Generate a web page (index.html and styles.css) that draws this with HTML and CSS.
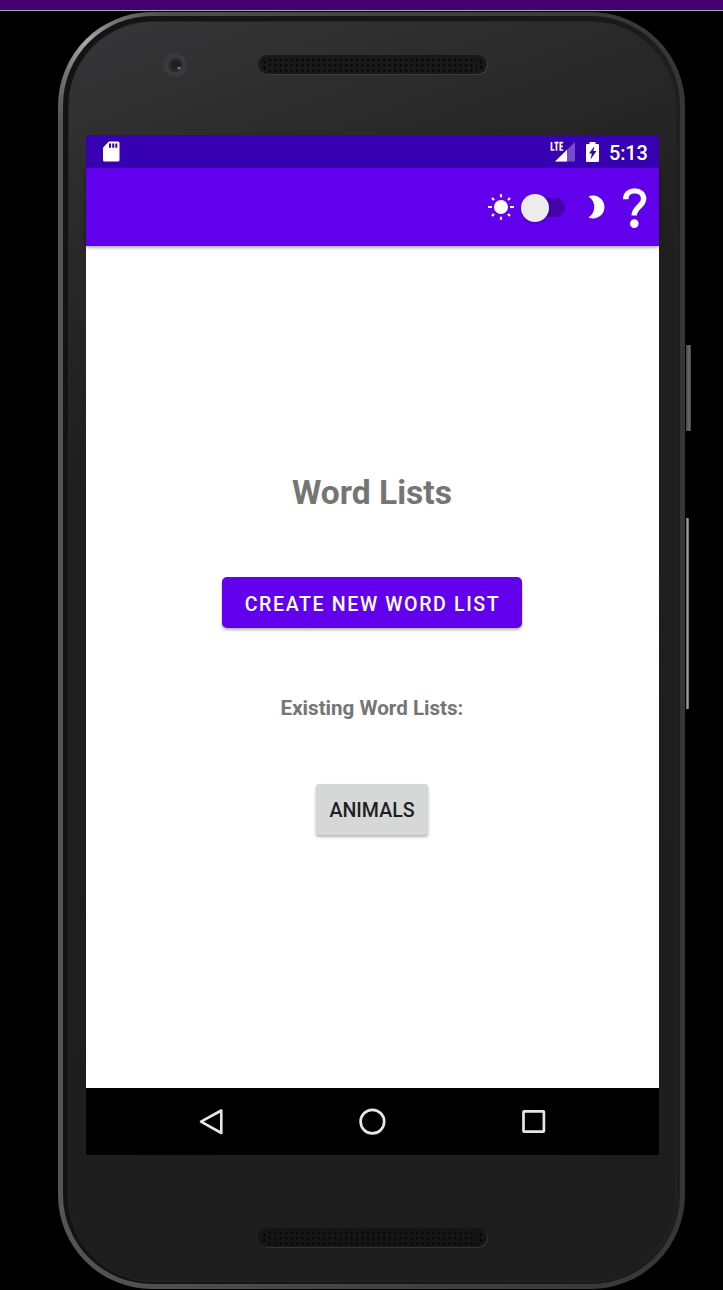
FILE: index.html
```html
<!DOCTYPE html>
<html lang="en">
<head>
<meta charset="utf-8">
<title>Word Lists</title>
<link rel="stylesheet" href="styles.css">
</head>
<body>
<div class="strip"></div>
<div class="phone">
  <span class="side-key power"></span>
  <span class="side-key volume"></span>
  <div class="groove">
    <div class="face">
      <div class="bezel-top">
        <svg class="camera" width="26" height="26" viewBox="0 0 26 26">
          <circle cx="13" cy="13" r="12" fill="#3a3a3b"/>
          <circle cx="13.5" cy="13" r="7" fill="#28282d"/>
          <circle cx="14" cy="13" r="4.500" fill="#201c26"/>
          <path d="M15 15h4l-1 3-2-1z" fill="#9a6062"/>
        </svg>
        <svg class="speaker" width="230" height="20" viewBox="0 0 230 20">
          <defs>
            <pattern id="holes" x="10" y="2.3" width="5.45" height="5.35" patternUnits="userSpaceOnUse">
              <circle cx="2" cy="2.4" r="1.4" fill="#050505"/>
              <circle cx="2.8" cy="1.6" r=".5" fill="#333"/>
            </pattern>
          </defs>
          <rect x="1" y="1" width="229" height="19" rx="9.5" fill="#3c3c3c"/>
          <rect x="0" y="0" width="229" height="19" rx="9.5" fill="#191919"/>
          <rect x="10" y="2.3" width="209" height="16" fill="url(#holes)"/>
          <g fill="#050505"><circle cx="6.5" cy="7" r="1.4"/><circle cx="6.5" cy="12.3" r="1.4"/><circle cx="223" cy="7" r="1.4"/><circle cx="223" cy="12.3" r="1.4"/></g>
        </svg>
      </div>
      <main class="screen">
        <div class="status">
          <svg class="sd" width="17" height="21" viewBox="0 0 17 21"><path fill="#fff" d="M6 .5h9a1.500 1.500 0 0 1 1.500 1.500v17a1.500 1.500 0 0 1-1.500 1.500H1.500A1.500 1.500 0 0 1 0 19V6.500z"/><path fill="#3700b3" d="M6 2.500h2v4.300H6zM9.200 2.500h2v4.300h-2zM12.300 2.500h2v4.300h-2z"/></svg>
          <div class="status-right">
            <svg class="signal" width="25" height="21" viewBox="0 0 25 21"><path fill="#fff" fill-opacity=".3" d="M25 1v19.500H5z"/><path fill="#fff" d="M17 8.800v11.700H5z"/><path fill="none" stroke="#fff" stroke-width="1.700" d="M1.500 1v8h3M4.400 1.700h4.200M6.500 1.700v8M13.200 1.700h-2.900V9h2.900M10.300 5.300h2.500"/></svg>
            <svg class="battery" width="13" height="20" viewBox="0 0 13 20"><path fill="#fff" d="M3.500 0h6v2H12a1 1 0 0 1 1 1v16a1 1 0 0 1-1 1H1a1 1 0 0 1-1-1V3a1 1 0 0 1 1-1h2.500z"/><path fill="#3700b3" d="M8.500 4 3 11.500h2.800L4.500 17.500l6-8.500H7.300z"/></svg>
            <span class="time">5:13</span>
          </div>
        </div>
        <header class="toolbar">
          <svg class="sun" width="26" height="26" viewBox="0 0 26 26"><circle cx="13" cy="13" r="7" fill="#fff"/><path stroke="#fff" stroke-width="2.200" d="M13 .3v3M13 22.700v3M0 13h4M22 13h4M4 4l2 2M20 20l2 2M22 4l-2 2M6 20l-2 2"/></svg>
          <div class="switch"><span class="thumb"></span></div>
          <svg class="moon" width="19" height="24" viewBox="0 0 19 24"><path fill="#fff" d="M.5 1.400A11.500 11.500 0 1 1 .5 22.600Q6.300 18.500 6.300 12T.5 1.400z"/></svg>
          <svg class="help" width="24" height="40" viewBox="0 0 24 40"><path fill="none" stroke="#fff" stroke-width="5.400" d="M2.700 11.200C2.700 5.700 6.600 2.900 11.600 2.900s9 2.900 9 7.900c0 7.500-9.400 8-9.400 16.700"/><circle cx="11.300" cy="35.600" r="4.300" fill="#fff"/></svg>
        </header>
        <section class="content">
          <h1 class="title">Word Lists</h1>
          <button class="create">CREATE NEW WORD LIST</button>
          <h2 class="subtitle">Existing Word Lists:</h2>
          <button class="list">ANIMALS</button>
        </section>
        <nav class="nav">
          <svg width="28" height="28" viewBox="0 0 28 28"><path fill="none" stroke="#e6e6e6" stroke-width="2.600" stroke-linejoin="round" d="M24.300 2.500v22.500L4 13.700z"/></svg>
          <svg width="28" height="28" viewBox="0 0 28 28"><circle cx="14.400" cy="13.600" r="11.800" fill="none" stroke="#e6e6e6" stroke-width="2.700"/></svg>
          <svg width="28" height="28" viewBox="0 0 28 28"><rect x="4.500" y="3.300" width="20.400" height="20.400" rx=".8" fill="none" stroke="#e6e6e6" stroke-width="2.700"/></svg>
        </nav>
      </main>
      <div class="bezel-bottom">
        <svg class="speaker" width="230" height="20" viewBox="0 0 230 20">
          <rect x="1" y="1" width="229" height="19" rx="9.500" fill="#343434"/>
          <rect x="0" y="0" width="229" height="19" rx="9.500" fill="#151515"/>
          <rect x="10" y="2.300" width="209" height="16" fill="url(#holes)"/>
          <g fill="#030303"><circle cx="6.500" cy="7" r="1.400"/><circle cx="6.500" cy="12.300" r="1.400"/><circle cx="223" cy="7" r="1.400"/><circle cx="223" cy="12.300" r="1.400"/></g>
        </svg>
      </div>
    </div>
  </div>
</div>
</body>
</html>
```

FILE: styles.css
```css
* { box-sizing: border-box; }
body { margin: 0; height: 1290px; overflow: hidden; background: #000; font-family: Roboto, sans-serif; }
svg { display: block; flex: none; }
.strip { height: 11px; background: #450073; border-bottom: 1px solid #aaa; }
.phone {
  position: relative; width: 627px; height: 1277px; margin: 1px 0 0 58px; padding: 4px 5px 5px;
  border-radius: 94px;
  background: radial-gradient(circle at 27px 30px, #aaa 0, rgba(130,130,130,.7) 35px, transparent 80px), linear-gradient(90deg, #555, #434343 50%, #373535);
}
.groove { height: 100%; padding: 5px 4px 2px 5px; border-radius: 89px; background: linear-gradient(90deg, #141313, #1a1919 90%, #201f1f); }
.face {
  display: flex; flex-direction: column; height: 100%; border-radius: 85px;
  border: 1px solid #252525;
  background: linear-gradient(160deg, #373739 0, #292929 15%, #1e1e1e 32%, #1d1d1d 100%);
}
.side-key { position: absolute; left: 628px; background: linear-gradient(90deg, #464646, #686868 60%, #444); border-radius: 0 1px 1px 0; }
.power { top: 333px; width: 5px; height: 86px; }
.volume { top: 506px; width: 3px; height: 191px; background: linear-gradient(90deg, #606060, #999 50%, #666); }
.bezel-top { display: flex; height: 113px; padding: 30px 0 0 93px; flex: none; }
.bezel-top .speaker { margin: 3px 0 0 70px; }
.screen { width: 573px; height: 1020px; margin-left: 17px; flex: none; display: flex; flex-direction: column; background: #fff; }
.status { height: 33px; background: #3700b3; display: flex; justify-content: space-between; align-items: center; padding: 0 11px 0 17px; }
.status-right { display: flex; align-items: center; color: #fff; }
.battery { margin: 0 11px; }
.time { font-size: 20px; line-height: 24px; font-weight: 500; letter-spacing: -.2px; width: 39px; margin: 2px 0 0 -1px; white-space: nowrap; }
.toolbar { height: 78px; background: #6200ee; display: flex; align-items: center; padding-left: 402px; box-shadow: 0 1px 4px rgba(0,0,0,.45); }
.switch { display: flex; align-items: center; width: 42px; height: 19px; margin: 1px 0 0 9px; border-radius: 10px; background: #4600ac; }
.thumb { width: 28px; height: 28px; flex: none; margin-left: -2px; border-radius: 50%; background: #ececec; box-shadow: 0 1px 2px rgba(0,0,0,.4); }
.moon { margin: 0 0 0 23px; }
.help { margin: 2px 0 0 16px; }
.content { height: 842px; display: flex; flex-direction: column; align-items: center; padding: 227px 1px 0 0; }
.title { margin: 0; font-size: 33.600px; line-height: 40px; font-weight: 700; color: #757575; }
.create { width: 300px; height: 51px; margin: 64px 0 0; padding: 3px 0 0 1px; border: 0; border-radius: 5px; background: #6200ee; color: #fff; font: 500 19.600px Roboto, sans-serif; letter-spacing: 1.600px; white-space: nowrap; box-shadow: 0 2px 3px rgba(0,0,0,.3); }
.subtitle { margin: 68px 0 0; font-size: 20.600px; line-height: 24px; font-weight: 700; color: #757575; }
.list { width: 112px; height: 51px; margin: 64px 0 0; padding: 2px 0 0; border: 0; border-radius: 3px; background: #d6d7d7; color: #1f1f1f; font: 500 19.600px Roboto, sans-serif; box-shadow: 0 2px 3px rgba(0,0,0,.3); }
.nav { height: 67px; background: #000; display: flex; align-items: center; gap: 133px; padding-left: 111px; }
.bezel-bottom { flex: 1; padding: 73px 0 0 189px; }
```
